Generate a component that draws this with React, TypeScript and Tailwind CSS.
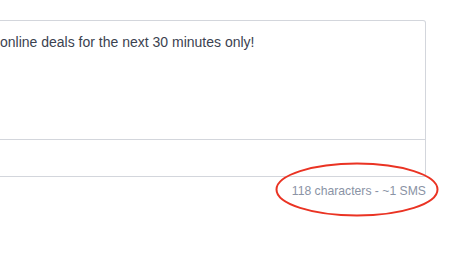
export default function App() {
  return (
    <div className="relative w-[458px] h-[258px] bg-white overflow-hidden font-['Liberation_Sans',Arial,sans-serif]">
      <div className="w-[426px] pt-[20px]">
        <div className="border-t border-r border-b border-[#d3d6dc] rounded-tr-[3px]">
          <div className="h-[118px] pt-[11px] text-[14px] leading-[20px] text-[#3b4250] whitespace-nowrap">
            online deals for the next 30 minutes only!
          </div>
          <div className="h-[37px] border-t border-[#d3d6dc]"></div>
        </div>
        <div className="mt-[6px] flex justify-end text-[12.2px] leading-[16px] text-[#8a93a5]">
          118 characters - ~1 SMS
        </div>
      </div>
      <svg className="absolute left-[274px] top-[161px]" width="166" height="57" viewBox="0 0 166 57">
        <ellipse cx="83" cy="28.5" rx="80.5" ry="26" fill="none" stroke="#ea3323" strokeWidth="2" />
      </svg>
    </div>
  );
}
